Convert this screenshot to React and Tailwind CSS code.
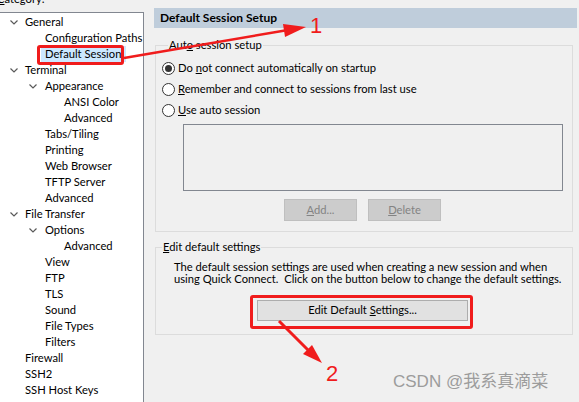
import React from "react";

const tree = [
  { t: "General", l: 0, c: true },
  { t: "Configuration Paths", l: 1 },
  { t: "Default Session", l: 1, sel: true },
  { t: "Terminal", l: 0, c: true },
  { t: "Appearance", l: 1, c: true },
  { t: "ANSI Color", l: 2 },
  { t: "Advanced", l: 2 },
  { t: "Tabs/Tiling", l: 1 },
  { t: "Printing", l: 1 },
  { t: "Web Browser", l: 1 },
  { t: "TFTP Server", l: 1 },
  { t: "Advanced", l: 1 },
  { t: "File Transfer", l: 0, c: true },
  { t: "Options", l: 1, c: true },
  { t: "Advanced", l: 2 },
  { t: "View", l: 1 },
  { t: "FTP", l: 1 },
  { t: "TLS", l: 1 },
  { t: "Sound", l: 1 },
  { t: "File Types", l: 1 },
  { t: "Filters", l: 1 },
  { t: "Firewall", l: 0 },
  { t: "SSH2", l: 0 },
  { t: "SSH Host Keys", l: 0 },
];

const textLeft = ["pl-[25px]", "pl-[45px]", "pl-[64px]"];
const chevLeft = ["left-[10px]", "left-[29px]", "left-[48px]"];

function Chevron({ l }) {
  return (
    <svg
      className={`absolute top-[6px] ${chevLeft[l]}`}
      width="8"
      height="5"
      viewBox="0 0 8 5"
    >
      <polyline points="0.5,0.5 4,4 7.5,0.5" fill="none" stroke="#5a5a5a" strokeWidth="1.2" />
    </svg>
  );
}

function Radio({ checked, children }) {
  return (
    <div className="h-[21px] flex items-center">
      <span className="w-[13px] h-[13px] rounded-full border border-[#333333] bg-white flex items-center justify-center">
        {checked && <span className="w-[7px] h-[7px] rounded-full bg-[#333333]" />}
      </span>
      <span className="ml-[3px]">{children}</span>
    </div>
  );
}

export default function App() {
  return (
    <div
      className="relative w-[579px] h-[402px] overflow-hidden bg-[#f0f0f0] flex text-[11.2px] text-black"
      style={{ fontFamily: 'Lato, "Noto Sans", sans-serif' }}
    >
      {/* Left column */}
      <div className="w-[144px] flex flex-col">
        <div className="h-[12px] overflow-hidden">
          <span className="block leading-[16px] -mt-[9px] -ml-[3px]">
            <span className="underline">C</span>ategory:
          </span>
        </div>
        <div className="flex-1 bg-white border-t border-r border-[#828790] pt-[1px]">
          {tree.map((it, i) => (
            <div key={i} className={`relative h-[16px] leading-[16px] ${textLeft[it.l]}`}>
              {it.c && <Chevron l={it.l} />}
              {it.sel ? (
                <span className="inline-block bg-[#cce8ff] -ml-[4px] pl-[4px] pr-[5px]">{it.t}</span>
              ) : (
                <span className="whitespace-nowrap">{it.t}</span>
              )}
            </div>
          ))}
        </div>
      </div>

      {/* Right column */}
      <div className="flex-1 pl-[10px] pr-[2px] pt-[8px] flex flex-col">
        <div className="h-[20px] bg-[#bfcddb] font-bold text-[12px] px-[6px] flex items-center">
          Default Session Setup
        </div>

        <fieldset className="mt-[9px] ml-[1px] mr-[4px] h-[195px] border border-[#dcdcdc] pl-[6px]">
          <legend className="ml-[6px] px-[1px] leading-[16px]">
            Aut<span className="underline">o</span> session setup
          </legend>
          <div className="pt-[5px]">
            <Radio checked>
              Do <span className="underline">n</span>ot connect automatically on startup
            </Radio>
            <Radio>
              <span className="underline">R</span>emember and connect to sessions from last use
            </Radio>
            <Radio>
              <span className="underline">U</span>se auto session
            </Radio>
            <div className="ml-[21px] mt-[3px] w-[380px] h-[67px] border border-[#828790]" />
            <div className="mt-[8px] ml-[122px] flex gap-[11px]">
              <div className="w-[73px] h-[22px] bg-[#cccccc] border border-[#bfbfbf] text-[#838383] flex items-center justify-center">
                <span>
                  <span className="underline">A</span>dd...
                </span>
              </div>
              <div className="w-[73px] h-[22px] bg-[#cccccc] border border-[#bfbfbf] text-[#838383] flex items-center justify-center">
                <span>
                  <span className="underline">D</span>elete
                </span>
              </div>
            </div>
          </div>
        </fieldset>

        <fieldset className="mt-[7px] ml-[1px] mr-[4px] h-[96px] border border-[#dcdcdc]">
          <legend className="ml-[6px] px-[1px] leading-[16px]">
            <span className="underline">E</span>dit default settings
          </legend>
          <div className="pl-[18px] pt-[6px] leading-[12px] whitespace-nowrap">
            <div>The default session settings are used when creating a new session and when</div>
            <div>using Quick Connect.&nbsp; Click on the button below to change the default settings.</div>
          </div>
          <div className="mt-[15px] ml-[101px] w-[211px] h-[21px] bg-[#e1e1e1] border border-[#adadad] flex items-center justify-center">
            <span>
              Edit Default <span className="underline">S</span>ettings...
            </span>
          </div>
        </fieldset>
      </div>

      {/* Annotations */}
      <div className="absolute left-[37px] top-[45px] w-[87px] h-[20px] border-[3px] border-[#f01c1c] rounded-[3px]" />
      <div className="absolute left-[250px] top-[295px] w-[223px] h-[34px] border-[3px] border-[#f01c1c] rounded-[3px]" />

      <svg className="absolute inset-0 pointer-events-none" width="579" height="402" viewBox="0 0 579 402">
        <line x1="124" y1="58" x2="288" y2="30" stroke="#f01c1c" strokeWidth="2.5" />
        <polygon points="306,27 285,37 283,24" fill="#f01c1c" />
        <line x1="279" y1="321" x2="310" y2="352" stroke="#f01c1c" strokeWidth="3" />
        <polygon points="322,363 303,354 312,345" fill="#f01c1c" />
      </svg>

      <div
        className="absolute left-[310px] top-[14px] text-[22px] leading-[24px] text-[#f01c1c]"
        style={{ fontFamily: '"Liberation Sans", sans-serif' }}
      >
        1
      </div>
      <div
        className="absolute left-[326px] top-[362px] text-[22px] leading-[24px] text-[#f01c1c]"
        style={{ fontFamily: '"Liberation Sans", sans-serif' }}
      >
        2
      </div>

      <div
        className="absolute left-[393px] top-[371px] text-[17px] leading-[22px] text-[#9c9c9c] whitespace-nowrap"
        style={{ fontFamily: '"Liberation Sans", "Noto Sans CJK SC", sans-serif' }}
      >
        CSDN @我系真滴菜
      </div>
    </div>
  );
}
